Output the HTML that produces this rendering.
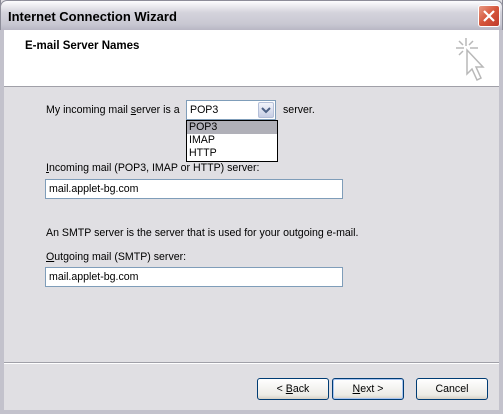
<!DOCTYPE html>
<html><head><style>
*{margin:0;padding:0;box-sizing:border-box}
body{width:503px;height:414px;overflow:hidden;background:#e0dfe3;font-family:"Liberation Sans",sans-serif;font-size:10.6px;color:#000;position:relative}
.win{position:absolute;left:0;top:0;width:503px;height:414px;border:1px solid #8a8a96;border-top:none}
.title{position:absolute;left:0;top:0;width:503px;height:30px;background:linear-gradient(#fdfdfe,#d4d3dc 40%,#c8c7d2 80%,#b8b7c4);border-radius:7px 7px 0 0;border:1px solid #8d8d99;border-bottom:none}
.title span{position:absolute;left:7px;top:8px;font-weight:bold;font-size:13px;color:#000}
.close{position:absolute;left:477px;top:4px;width:22px;height:22px;border:1px solid #fff;border-radius:3px;background:linear-gradient(135deg,#e89a84,#d5553a 50%,#c0392b);}
.side{position:absolute;top:30px;width:4px;height:384px;background:#c3c2cc}
.hdr{position:absolute;left:4px;top:30px;width:495px;height:57px;background:#fff;border-bottom:1px solid #a0a0a8}
.hdr b{position:absolute;left:21px;top:10px;font-size:11.5px}
.t{position:absolute;white-space:nowrap}
.inp{position:absolute;background:#fff;border:1px solid #7f9db9;height:20px;padding:3px 0 0 3px}
.sel{position:absolute;left:186px;top:100px;width:90px;height:20px;background:#fff;border:1px solid #7f9db9;padding:3px 0 0 3px}
.arr{position:absolute;right:1px;top:1px;width:16px;height:16px;background:linear-gradient(#f2f4fb,#c6cde4);border:1px solid #b4bfd8;border-radius:2px}
.list{position:absolute;left:186px;top:120px;width:92px;height:42px;background:#fff;border:1px solid #000}
.list div{height:13px;padding-left:2px;line-height:13px}
.btn{position:absolute;top:378px;height:22px;border:1px solid #003c74;border-radius:3px;background:linear-gradient(#fff,#ecebe6 80%,#d6d0c5);text-align:center;line-height:20px}
.sep{position:absolute;left:4px;top:362px;width:495px;height:2px;border-top:1px solid #a0a0a8;border-bottom:1px solid #fff}
</style></head><body>
<div class="win"></div>
<div class="side" style="left:0"></div><div class="side" style="left:499px"></div>
<div style="position:absolute;left:0;top:410px;width:503px;height:4px;background:#c3c2cc"></div>
<div class="title"><span>Internet Connection Wizard</span>
<div class="close"><svg width="20" height="20" viewBox="0 0 20 20"><path d="M5 5L15 15M15 5L5 15" stroke="#fff" stroke-width="2.2"/></svg></div></div>
<div class="hdr"><b>E-mail Server Names</b>
<svg style="position:absolute;left:448px;top:6px" width="40" height="52" viewBox="0 0 40 52"><g stroke="#b8b8b8" stroke-width="1.5" fill="none"><path d="M14 2V10M4 12H12M18 12H26M7 5L11 9M21 5L17 9M7 19L11 15"/><path d="M15 14L15 38L20 33L25 44L29 42L24 31L31 31Z"/></g></svg></div>
<div class="t" style="left:46px;top:104px">My incoming mail <u>s</u>erver is a</div>
<div class="sel">POP3<div class="arr"><svg width="14" height="14" viewBox="0 0 14 14"><path d="M3 5L7 9L11 5" stroke="#4d6185" stroke-width="2" fill="none"/></svg></div></div>
<div class="t" style="left:283px;top:104px">server.</div>
<div class="t" style="left:46px;top:162px"><u>I</u>ncoming mail (POP3, IMAP or HTTP) server:</div>
<div class="list"><div style="background:#b0b0b8">POP3</div><div>IMAP</div><div>HTTP</div></div>
<div class="inp" style="left:45px;top:179px;width:298px">mail.applet-bg.com</div>
<div class="t" style="left:46px;top:227px">An SMTP server is the server that is used for your outgoing e-mail.</div>
<div class="t" style="left:46px;top:251px"><u>O</u>utgoing mail (SMTP) server:</div>
<div class="inp" style="left:45px;top:267px;width:298px">mail.applet-bg.com</div>
<div class="sep"></div>
<div class="btn" style="left:257px;width:72px">&lt; <u>B</u>ack</div>
<div class="btn" style="left:332px;width:72px;border-color:#003c74;box-shadow:inset 0 0 0 1px #a8c4f0"><u>N</u>ext &gt;</div>
<div class="btn" style="left:416px;width:72px">Cancel</div>
</body></html>
